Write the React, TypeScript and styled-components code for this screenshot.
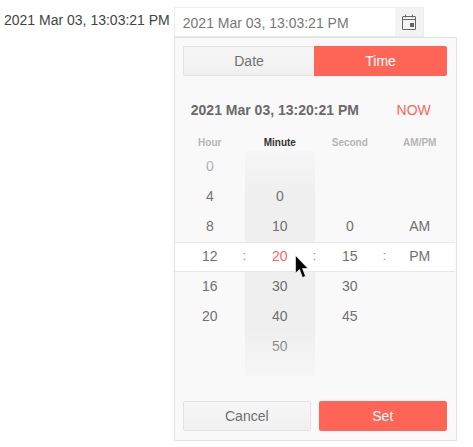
import styled, { createGlobalStyle } from "styled-components";

const GlobalStyle = createGlobalStyle`
  html, body {
    margin: 0;
    background: #fff;
    font-family: "Liberation Sans", Arial, sans-serif;
    font-size: 14px;
    color: #555;
  }
`;

const Page = styled.div`
  display: flex;
  align-items: flex-start;
  gap: 4px;
  padding: 7px 0 0 4px;
  width: 473px;
  height: 447px;
  box-sizing: border-box;
  position: relative;
  overflow: hidden;
`;

const Label = styled.span`
  color: #444;
  line-height: 27px;
  white-space: nowrap;
`;

const Field = styled.div`
  display: flex;
  flex-direction: column;
`;

const InputBox = styled.div`
  width: 250px;
  height: 30px;
  box-sizing: border-box;
  display: flex;
  border: 1px solid #eee;
  border-bottom-color: #e8e8e8;
`;

const InputText = styled.div`
  flex: 1;
  padding-left: 8px;
  line-height: 30px;
  color: #777;
`;

const IconAddon = styled.div`
  width: 28px;
  background: #f3f3f3;
  display: flex;
  align-items: center;
  justify-content: center;
`;

const Popup = styled.div`
  width: 283px;
  height: 404px;
  box-sizing: border-box;
  background: #f9f9f9;
  border: 1px solid #e3e3e3;
  padding: 8px 8px 9px;
  display: flex;
  flex-direction: column;
`;

const Segments = styled.div`
  display: flex;
  height: 30px;
  width: 264px;
`;

const Button = styled.div<{ $primary?: boolean }>`
  display: flex;
  align-items: center;
  justify-content: center;
  box-sizing: border-box;
  height: 30px;
  border-radius: 2px;
  font-size: 14px;
  ${(p) =>
    p.$primary
      ? "background: #ff6557; color: #fff;"
      : "background: linear-gradient(#f6f6f6, #f0f0f0); border: 1px solid #e3e3e3; color: #707070;"}
`;

const Segment = styled(Button)`
  flex: 1;
  &:first-child {
    border-right: none;
    border-radius: 2px 0 0 2px;
    flex: 131;
  }
  &:last-child {
    flex: 133;
    border-radius: 0 2px 2px 0;
  }
`;

const Summary = styled.div`
  display: flex;
  justify-content: space-between;
  align-items: center;
  height: 20px;
  margin: 24px 17px 0 8px;
`;

const SummaryText = styled.span`
  font-size: 14px;
  font-weight: 700;
  color: #6a6a6a;
`;

const NowLink = styled.span`
  color: #ff6557;
  font-size: 14px;
`;

const Columns = styled.div`
  display: grid;
  grid-template-columns: repeat(4, 70px);
  margin: 16px -8px 0 -8px;
`;

const ColumnTitle = styled.div<{ $active?: boolean }>`
  height: 15px;
  line-height: 14px;
  text-align: center;
  font-size: 10px;
  font-weight: 700;
  color: ${(p) => (p.$active ? "#333" : "#b5b5b5")};
`;

const Wheel = styled.div`
  grid-column: 1 / -1;
  display: grid;
  grid-template-columns: repeat(4, 70px);
  height: 225px;
  position: relative;
`;

const WheelColumn = styled.div<{ $active?: boolean }>`
  background: ${(p) => (p.$active ? "#efefef" : "transparent")};
`;

const Value = styled.div<{ $selected?: boolean }>`
  position: relative;
  z-index: 2;
  height: 30px;
  line-height: 30px;
  text-align: center;
  font-size: 14px;
  color: ${(p) => (p.$selected ? "#ff6557" : "#707070")};
`;

// white band behind the selected row
const SelectedBand = styled.div`
  position: absolute;
  z-index: 1;
  left: 0;
  right: 0;
  top: 91px;
  height: 28px;
  background: #fff;
  border-top: 1px solid #e8e8e8;
  border-bottom: 1px solid #e8e8e8;
`;

const Colon = styled.span<{ $col: number }>`
  position: absolute;
  z-index: 2;
  top: 6px;
  left: ${(p) => p.$col * 70 - 2}px;
  font-size: 12px;
  color: #888;
`;

const Fade = styled.div<{ $side: "top" | "bottom" }>`
  position: absolute;
  z-index: 3;
  left: 0;
  right: 0;
  height: 45px;
  ${(p) => p.$side}: 0;
  background: linear-gradient(
    to ${(p) => p.$side},
    rgba(249, 249, 249, 0),
    rgba(249, 249, 249, 0.7)
  );
`;

const Actions = styled.div`
  display: flex;
  gap: 8px;
  margin-top: auto;
`;

const ActionButton = styled(Button)`
  width: 128px;
`;

const Cursor = styled.svg`
  position: absolute;
  left: 295px;
  top: 255px;
  z-index: 5;
`;

const CalendarIcon = () => (
  <svg width="14" height="16" viewBox="0 0 14 16" fill="none" stroke="#666" strokeWidth="1">
    <rect x="0.5" y="2.5" width="13" height="13" rx="0.5" />
    <path d="M0.5 5.5H13.5" />
    <path d="M3.5 0.5V3.5M10.5 0.5V3.5" />
    <rect x="8" y="9" width="4" height="4" fill="#666" stroke="none" />
  </svg>
);

const columns = [
  { title: "Hour", values: ["0", "4", "8", "12", "16", "20"] },
  { title: "Minute", values: ["", "0", "10", "20", "30", "40", "50"], active: true },
  { title: "Second", values: ["", "", "0", "15", "30", "45"] },
  { title: "AM/PM", values: ["", "", "AM", "PM"] },
];

const App = () => {
  return (
    <Page>
      <GlobalStyle />
      <Label>2021 Mar 03, 13:03:21 PM</Label>
      <Field>
        <InputBox>
          <InputText>2021 Mar 03, 13:03:21 PM</InputText>
          <IconAddon>
            <CalendarIcon />
          </IconAddon>
        </InputBox>
        <Popup>
          <Segments>
            <Segment>Date</Segment>
            <Segment $primary>Time</Segment>
          </Segments>
          <Summary>
            <SummaryText>2021 Mar 03, 13:20:21 PM</SummaryText>
            <NowLink>NOW</NowLink>
          </Summary>
          <Columns>
            {columns.map((c) => (
              <ColumnTitle key={c.title} $active={c.active}>
                {c.title}
              </ColumnTitle>
            ))}
            <Wheel>
              {columns.map((c) => (
                <WheelColumn key={c.title} $active={c.active}>
                  {c.values.map((v, i) => (
                    <Value key={i} $selected={c.active && i === 3}>
                      {v}
                    </Value>
                  ))}
                </WheelColumn>
              ))}
              <SelectedBand>
                <Colon $col={1}>:</Colon>
                <Colon $col={2}>:</Colon>
                <Colon $col={3}>:</Colon>
              </SelectedBand>
              <Fade $side="top" />
              <Fade $side="bottom" />
            </Wheel>
          </Columns>
          <Actions>
            <ActionButton>Cancel</ActionButton>
            <ActionButton $primary>Set</ActionButton>
          </Actions>
        </Popup>
      </Field>
      <Cursor width="14" height="24" viewBox="0 0 14 24">
        <path d="M0.5 0.5V18L4.5 14.5L7.5 22.5L10.5 21.2L7.5 13.5H13Z" fill="#000" stroke="#fff" strokeWidth="0.6" />
      </Cursor>
    </Page>
  );
};

export default App;
